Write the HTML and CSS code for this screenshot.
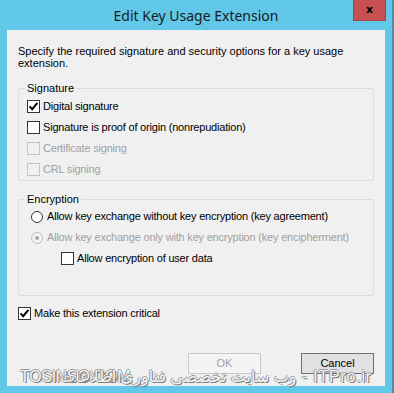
FILE: index.html
```html
<!DOCTYPE html>
<html>
<head>
<meta charset="utf-8">
<link rel="stylesheet" href="styles.css">
</head>
<body>
<div class="window">
  <div class="titlebar">
    <span class="title">Edit Key Usage Extension</span>
    <div class="close">x</div>
  </div>
  <div class="client">
    <p class="desc">Specify the required signature and security options for a key usage<br>extension.</p>

    <fieldset class="group sig">
      <legend>Signature</legend>
      <div class="row"><span class="cb on"><svg viewBox="0 0 11 11" width="11" height="11"><path d="M1.6 5.4 L4.2 8.2 L9.4 1.8" fill="none" stroke="#000" stroke-width="2"/></svg></span><span>Digital signature</span></div>
      <div class="row"><span class="cb"></span><span>Signature is proof of origin (nonrepudiation)</span></div>
      <div class="row dis"><span class="cb"></span><span>Certificate signing</span></div>
      <div class="row dis"><span class="cb"></span><span>CRL signing</span></div>
    </fieldset>

    <fieldset class="group enc">
      <legend>Encryption</legend>
      <div class="row rad"><span class="radio"></span><span>Allow key exchange without key encryption (key agreement)</span></div>
      <div class="row rad dis"><span class="radio sel"></span><span>Allow key exchange only with key encryption (key encipherment)</span></div>
      <div class="row sub"><span class="cb"></span><span>Allow encryption of user data</span></div>
    </fieldset>

    <div class="row critical"><span class="cb on"><svg viewBox="0 0 11 11" width="11" height="11"><path d="M1.6 5.4 L4.2 8.2 L9.4 1.8" fill="none" stroke="#000" stroke-width="2"/></svg></span><span>Make this extension critical</span></div>

    <div class="buttons">
      <div class="btn disabled">OK</div>
      <div class="btn default">Cancel</div>
    </div>
  </div>
  <div class="watermark">
    <span class="wm-left">TOSINSO.COM</span>
    <span class="wm-right">ITPro.ir - وب سایت تخصصی فناوری اطلاعات</span>
  </div>
</div>
</body>
</html>
```

FILE: styles.css
```css
* { box-sizing: border-box; }
html, body { margin: 0; padding: 0; }
body {
  width: 394px;
  height: 393px;
  overflow: hidden;
  font-family: "Liberation Sans", Arial, sans-serif;
}
.window {
  position: relative;
  width: 394px;
  height: 393px;
  background: #61c8ea;
  display: flex;
  flex-direction: column;
  padding: 0 9px 7px 7px;
  box-shadow: inset -2px 0 0 #4e8fa6;
}
.titlebar {
  height: 30px;
  display: grid;
  grid-template-columns: 1fr auto 1fr;
  align-items: start;
}
.title {
  grid-column: 2;
  font-family: "Noto Sans", "Open Sans", sans-serif;
  font-size: 14px;
  line-height: 29px;
  padding-top: 1px;
  color: #1a1a1a;
  white-space: nowrap;
}
.close {
  grid-column: 3;
  justify-self: end;
  margin-right: -1px;
  width: 33px;
  height: 21px;
  background: #c75050;
  border: 1px solid #a94444;
  border-top: none;
  color: #000;
  font-family: "DejaVu Sans", sans-serif;
  font-weight: bold;
  font-size: 11px;
  line-height: 19px;
  text-align: center;
}
.client {
  flex: 1;
  background: #f0f0f0;
  padding: 15px 11px 12px 11px;
  display: flex;
  flex-direction: column;
  font-size: 11px;
  color: #000;
}
.desc {
  margin: 0;
  line-height: 12px;
  white-space: nowrap;
}
.group {
  margin: 12px 0 0 0;
  min-inline-size: 0;
  border: 1px solid #dcdcdc;
  border-radius: 2px;
  padding: 1px 0 0 8px;
}
.group legend {
  padding: 0 2px;
  margin-left: -2px;
  line-height: 14px;
}
.enc {
  margin-top: 11px;
  padding: 0 0 26px 8px;
}
.row {
  height: 21px;
  display: flex;
  align-items: center;
  gap: 3px;
  line-height: 21px;
  white-space: nowrap;
  letter-spacing: -0.2px;
}
.cb {
  width: 13px;
  height: 13px;
  border: 1px solid #333;
  background: #fff;
  display: flex;
  align-items: center;
  justify-content: center;
  flex: none;
}
.dis { color: #a0a0a0; }
.dis .cb { border-color: #c4c4c4; background: #f0f0f0; }
.rad { margin-left: 4px; gap: 4px; }
.radio {
  width: 12px;
  height: 12px;
  border: 1px solid #333;
  border-radius: 50%;
  background: #fff;
  flex: none;
  display: flex;
  align-items: center;
  justify-content: center;
}
.dis .radio { border-color: #bcbcbc; background: #f4f4f4; }
.radio.sel::after {
  content: "";
  width: 4px;
  height: 4px;
  border-radius: 50%;
  background: #a8a8a8;
}
.sub { margin-left: 34px; }
.critical { margin-top: 7px; }
.buttons {
  margin-top: auto;
  display: flex;
  justify-content: flex-end;
  gap: 40px;
}
.btn {
  width: 73px;
  height: 21px;
  line-height: 19px;
  text-align: center;
  font-size: 11px;
}
.btn.disabled {
  border: 1px solid #c8c8c8;
  background: #f4f4f4;
  color: #a0a0a0;
}
.btn.default {
  border: 1px solid #707070;
  background: #e1e1e1;
  color: #000;
}
.watermark {
  position: absolute;
  left: 0;
  top: 367px;
  width: 394px;
  height: 20px;
  font-family: "Liberation Sans", "DejaVu Sans", sans-serif;
  font-size: 16px;
  line-height: 20px;
  color: rgba(255, 255, 255, 0.92);
  text-shadow: 1px 1px 0 #7a7a7a, -1px 0 0 #9a9a9a, 0 -1px 0 #9a9a9a;
  white-space: nowrap;
}
.wm-left {
  position: absolute;
  left: 20px;
  top: 0;
  letter-spacing: -0.3px;
}
.wm-right {
  position: absolute;
  right: 22px;
  top: 0;
  direction: rtl;
  letter-spacing: 0.8px;
}
```
